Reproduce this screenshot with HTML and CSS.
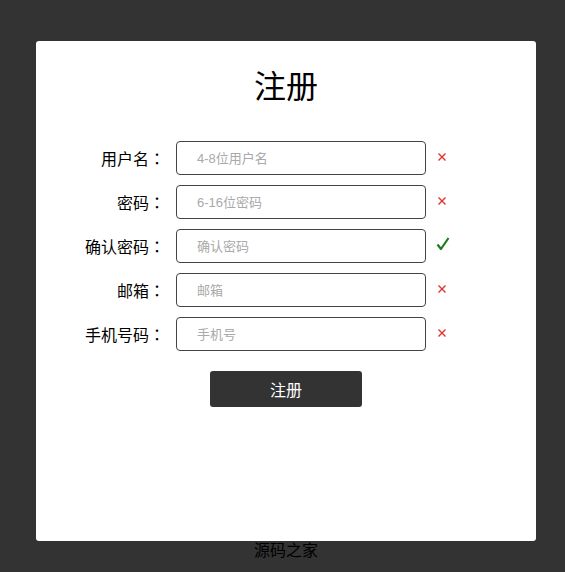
FILE: index.html
```html
<!DOCTYPE html>
<html lang="zh-CN">
<head>
  <meta charset="UTF-8" />
  <title>注册</title>
  <link rel="stylesheet" href="styles.css">
</head>
<body>
  <div class="page">
    <div class="card">
      <h1 class="title">注册</h1>
      <form class="reg-form">
        <div class="row">
          <label>用户名<span class="colon" lang="ja">：</span></label>
          <input type="text" placeholder="4-8位用户名" />
          <span class="mark bad"><svg width="10" height="10" viewBox="0 0 10 10"><path d="M1.5 1.5 L8.5 8.5 M8.5 1.5 L1.5 8.5" stroke="#e03030" stroke-width="1.4"/></svg></span>
        </div>
        <div class="row">
          <label>密码<span class="colon" lang="ja">：</span></label>
          <input type="password" placeholder="6-16位密码" />
          <span class="mark bad"><svg width="10" height="10" viewBox="0 0 10 10"><path d="M1.5 1.5 L8.5 8.5 M8.5 1.5 L1.5 8.5" stroke="#e03030" stroke-width="1.4"/></svg></span>
        </div>
        <div class="row">
          <label>确认密码<span class="colon" lang="ja">：</span></label>
          <input type="password" placeholder="确认密码" />
          <span class="mark ok"><svg width="14" height="14" viewBox="0 0 14 14"><path d="M1.5 7.5 L5 12 L12.5 1" fill="none" stroke="#1f7a1f" stroke-width="2.2" stroke-linejoin="round"/></svg></span>
        </div>
        <div class="row">
          <label>邮箱<span class="colon" lang="ja">：</span></label>
          <input type="text" placeholder="邮箱" />
          <span class="mark bad"><svg width="10" height="10" viewBox="0 0 10 10"><path d="M1.5 1.5 L8.5 8.5 M8.5 1.5 L1.5 8.5" stroke="#e03030" stroke-width="1.4"/></svg></span>
        </div>
        <div class="row">
          <label>手机号码<span class="colon" lang="ja">：</span></label>
          <input type="text" placeholder="手机号" />
          <span class="mark bad"><svg width="10" height="10" viewBox="0 0 10 10"><path d="M1.5 1.5 L8.5 8.5 M8.5 1.5 L1.5 8.5" stroke="#e03030" stroke-width="1.4"/></svg></span>
        </div>
        <button type="button" class="submit">注册</button>
      </form>
    </div>
    <div class="footer">源码之家</div>
  </div>
</body>
</html>
```

FILE: styles.css
```css
* {
  margin: 0;
  padding: 0;
  box-sizing: border-box;
}
body {
  background: #333;
  font-family: "Liberation Sans", "Noto Sans CJK SC", sans-serif;
  color: #000;
}
.page {
  width: 500px;
  margin: 41px 0 0 36px;
}
.card {
  background: #fff;
  height: 500px;
  border-radius: 3px;
  padding-top: 24px;
}
.title {
  text-align: center;
  font-size: 32px;
  font-weight: normal;
  line-height: 44px;
  margin-bottom: 32px;
}
.reg-form {
  display: flex;
  flex-direction: column;
  align-items: center;
}
.row {
  display: flex;
  align-items: center;
  width: 100%;
  margin-bottom: 10px;
}
.row label {
  width: 129px;
  text-align: right;
  font-size: 16px;
  margin-right: 11px;
}
.colon {
  display: inline-block;
  width: 16px;
  text-align: left;
  font-family: "Noto Sans CJK JP", sans-serif;
}
.row input {
  width: 250px;
  height: 34px;
  border: 1px solid #444;
  border-radius: 4px;
  padding-left: 20px;
  font-size: 13px;
  font-family: "Liberation Sans", "Noto Sans CJK SC", sans-serif;
  outline: none;
}
.row input::placeholder {
  color: #a9a9a9;
}
.mark {
  display: flex;
  margin-left: 11px;
  margin-top: -3px;
}
.mark.ok {
  margin-left: 10px;
  margin-top: -5px;
}
.submit {
  width: 152px;
  height: 36px;
  margin-top: 10px;
  background: #333;
  color: #fff;
  border: none;
  border-radius: 3px;
  font-size: 16px;
  font-family: "Liberation Sans", "Noto Sans CJK SC", sans-serif;
}
.footer {
  text-align: center;
  font-size: 16px;
  line-height: 20px;
}
```
